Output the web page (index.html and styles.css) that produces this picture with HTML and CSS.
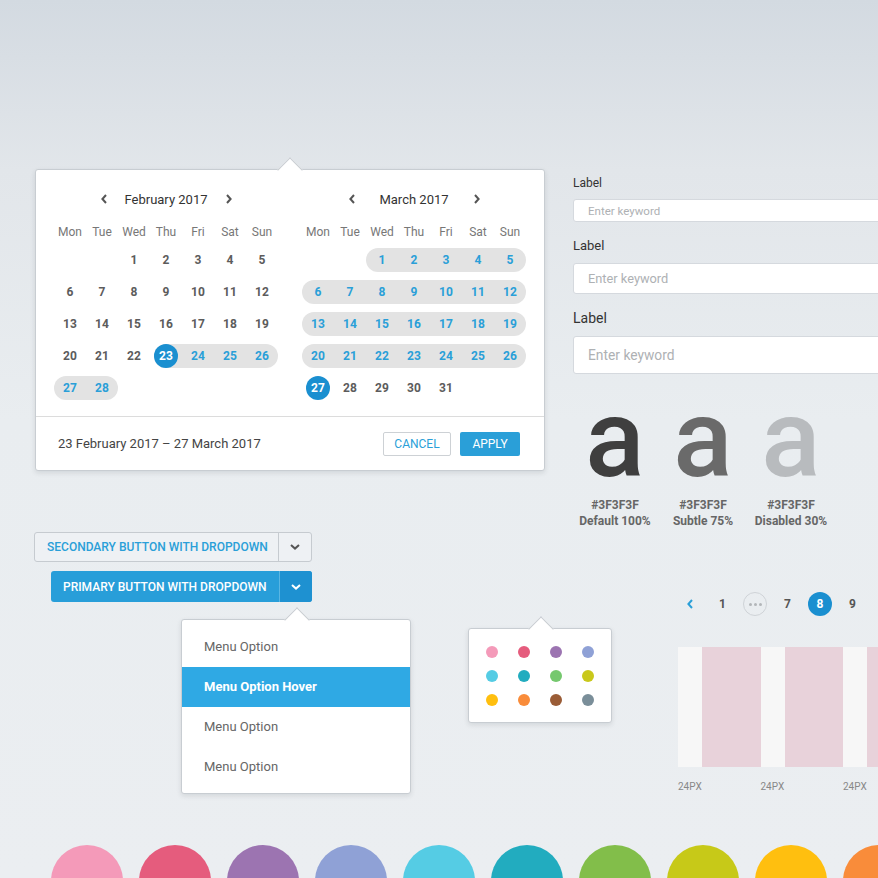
FILE: index.html
```html
<!DOCTYPE html>
<html lang="en">
<head>
<meta charset="utf-8">
<title>UI Kit</title>
<link rel="stylesheet" href="styles.css">
</head>
<body>
<main class="board">
  <section class="top">
    <div class="datepicker">
      <div class="cal-body">
        <div class="month">
          <div class="mhead">
            <span class="nav"><svg width="6" height="10" viewBox="0 0 6 10"><path d="M5 1 L1.4 5 L5 9" fill="none" stroke="#555" stroke-width="2"/></svg></span>
            <span class="mtitle">February 2017</span>
            <span class="nav"><svg width="6" height="10" viewBox="0 0 6 10"><path d="M1 1 L4.6 5 L1 9" fill="none" stroke="#555" stroke-width="2"/></svg></span>
          </div>
          <div class="days">
            <span class="wd">Mon</span><span class="wd">Tue</span><span class="wd">Wed</span><span class="wd">Thu</span><span class="wd">Fri</span><span class="wd">Sat</span><span class="wd">Sun</span>
            <span></span><span></span><span class="d">1</span><span class="d">2</span><span class="d">3</span><span class="d">4</span><span class="d">5</span>
            <span class="d">6</span><span class="d">7</span><span class="d">8</span><span class="d">9</span><span class="d">10</span><span class="d">11</span><span class="d">12</span>
            <span class="d">13</span><span class="d">14</span><span class="d">15</span><span class="d">16</span><span class="d">17</span><span class="d">18</span><span class="d">19</span>
            <span class="d">20</span><span class="d">21</span><span class="d">22</span><span class="d in sel"><span class="dot">23</span></span><span class="d in">24</span><span class="d in">25</span><span class="d in re">26</span>
            <span class="d in rs">27</span><span class="d in re">28</span>
          </div>
        </div>
        <div class="month">
          <div class="mhead">
            <span class="nav"><svg width="6" height="10" viewBox="0 0 6 10"><path d="M5 1 L1.4 5 L5 9" fill="none" stroke="#555" stroke-width="2"/></svg></span>
            <span class="mtitle">March 2017</span>
            <span class="nav"><svg width="6" height="10" viewBox="0 0 6 10"><path d="M1 1 L4.6 5 L1 9" fill="none" stroke="#555" stroke-width="2"/></svg></span>
          </div>
          <div class="days">
            <span class="wd">Mon</span><span class="wd">Tue</span><span class="wd">Wed</span><span class="wd">Thu</span><span class="wd">Fri</span><span class="wd">Sat</span><span class="wd">Sun</span>
            <span></span><span></span><span class="d in rs">1</span><span class="d in">2</span><span class="d in">3</span><span class="d in">4</span><span class="d in re">5</span>
            <span class="d in rs">6</span><span class="d in">7</span><span class="d in">8</span><span class="d in">9</span><span class="d in">10</span><span class="d in">11</span><span class="d in re">12</span>
            <span class="d in rs">13</span><span class="d in">14</span><span class="d in">15</span><span class="d in">16</span><span class="d in">17</span><span class="d in">18</span><span class="d in re">19</span>
            <span class="d in rs">20</span><span class="d in">21</span><span class="d in">22</span><span class="d in">23</span><span class="d in">24</span><span class="d in">25</span><span class="d in re">26</span>
            <span class="d"><span class="dot">27</span></span><span class="d">28</span><span class="d">29</span><span class="d">30</span><span class="d">31</span>
          </div>
        </div>
      </div>
      <div class="cal-foot">
        <span class="range">23 February 2017 – 27 March 2017</span>
        <div class="actions">
          <span class="btn-ghost">CANCEL</span>
          <span class="btn-apply">APPLY</span>
        </div>
      </div>
    </div>

    <div class="side">
      <div class="lbl lbl-sm">Label</div>
      <div class="input in-sm">Enter keyword</div>
      <div class="lbl lbl-md">Label</div>
      <div class="input in-md">Enter keyword</div>
      <div class="lbl lbl-lg">Label</div>
      <div class="input in-lg">Enter keyword</div>
      <div class="type-row">
        <div class="type">
          <div class="glyph g100">a</div>
          <div class="type-meta">#3F3F3F<br>Default 100%</div>
        </div>
        <div class="type">
          <div class="glyph g75">a</div>
          <div class="type-meta">#3F3F3F<br>Subtle 75%</div>
        </div>
        <div class="type">
          <div class="glyph g30">a</div>
          <div class="type-meta">#3F3F3F<br>Disabled 30%</div>
        </div>
      </div>
    </div>
  </section>

  <section class="mid">
    <div class="btn-col">
      <div class="split secondary">
        <span class="split-label">SECONDARY BUTTON WITH DROPDOWN</span>
        <span class="caret"><svg width="10" height="6" viewBox="0 0 10 6"><path d="M1 1 L5 4.6 L9 1" fill="none" stroke="#555" stroke-width="2"/></svg></span>
      </div>
      <div class="split primary">
        <span class="split-label">PRIMARY BUTTON WITH DROPDOWN</span>
        <span class="caret"><svg width="10" height="6" viewBox="0 0 10 6"><path d="M1 1 L5 4.6 L9 1" fill="none" stroke="#fff" stroke-width="2"/></svg></span>
      </div>
      <div class="menu">
        <div class="opt">Menu Option</div>
        <div class="opt hover">Menu Option Hover</div>
        <div class="opt">Menu Option</div>
        <div class="opt">Menu Option</div>
      </div>
    </div>

    <div class="picker">
      <span class="pdot pink"></span><span class="pdot rose"></span><span class="pdot purple"></span><span class="pdot peri"></span>
      <span class="pdot cyan"></span><span class="pdot teal"></span><span class="pdot green-l"></span><span class="pdot olive"></span>
      <span class="pdot amber"></span><span class="pdot orange"></span><span class="pdot brown"></span><span class="pdot slate"></span>
    </div>

    <div class="pager-col">
      <div class="pages">
        <span class="pg"><svg width="6" height="10" viewBox="0 0 6 10"><path d="M5 1 L1.4 5 L5 9" fill="none" stroke="#2a9fd8" stroke-width="2"/></svg></span>
        <span class="pg">1</span>
        <span class="pg more"><i></i><i></i><i></i></span>
        <span class="pg">7</span>
        <span class="pg on">8</span>
        <span class="pg">9</span>
      </div>
      <div class="gridbox">
        <span class="gut"></span><span class="colm"></span>
        <span class="gut"></span><span class="colm"></span>
        <span class="gut"></span><span class="colm"></span>
      </div>
      <div class="glabels">
        <span>24PX</span><span>24PX</span><span>24PX</span>
      </div>
    </div>
  </section>

  <section class="swatches">
    <span class="sw pink"></span>
    <span class="sw rose"></span>
    <span class="sw purple"></span>
    <span class="sw peri"></span>
    <span class="sw cyan"></span>
    <span class="sw teal"></span>
    <span class="sw green"></span>
    <span class="sw lime"></span>
    <span class="sw amber"></span>
    <span class="sw orange"></span>
  </section>
</main>
</body>
</html>
```

FILE: styles.css
```css
* { box-sizing: border-box; margin: 0; padding: 0; }

html, body {
  width: 878px;
  height: 878px;
  overflow: hidden;
}

body {
  font-family: Roboto, "Liberation Sans", Arial, sans-serif;
  color: #444;
  background: linear-gradient(to bottom, #d3dae1 0px, #e2e6ea 170px, #e9edf0 420px, #ebeef1 878px);
}

.board {
  width: 878px;
  height: 878px;
  overflow: hidden;
  padding-top: 157px;
}

/* ---------- top row ---------- */
.top {
  display: flex;
  align-items: flex-start;
}

.datepicker {
  position: relative;
  flex: none;
  width: 510px;
  margin-left: 35px;
  margin-top: 12px;
  background: #fff;
  border: 1px solid #c8cdd2;
  border-radius: 3px;
  box-shadow: 0 2px 5px rgba(40, 50, 60, 0.12);
}

.datepicker::before {
  content: "";
  position: absolute;
  top: -9px;
  left: 245px;
  width: 17px;
  height: 17px;
  background: #fff;
  border-top: 1px solid #c8cdd2;
  border-left: 1px solid #c8cdd2;
  transform: rotate(45deg);
}

.cal-body {
  display: flex;
  gap: 24px;
  padding: 19px 18px 12px;
}

.month { width: 224px; }

.mhead {
  display: grid;
  grid-template-columns: 24px 1fr 24px;
  align-items: center;
  width: 149px;
  height: 20px;
  margin: 0 auto;
}

.nav {
  display: flex;
  justify-content: center;
  align-items: center;
}

.mtitle {
  text-align: center;
  font-size: 13px;
  color: #333;
  white-space: nowrap;
}

.days {
  display: grid;
  grid-template-columns: repeat(7, 32px);
  grid-template-rows: 24px;
  grid-auto-rows: 32px;
  align-items: center;
  margin-top: 11px;
}

.wd {
  text-align: center;
  font-size: 12px;
  line-height: 24px;
  color: #777;
}

.d {
  height: 24px;
  display: flex;
  align-items: center;
  justify-content: center;
  font-size: 12px;
  font-weight: 700;
  color: #5c5c5c;
}

.d.in {
  background: #e3e3e3;
  color: #2a9fd8;
}

.d.rs { border-radius: 12px 0 0 12px; }
.d.re { border-radius: 0 12px 12px 0; }

.d.sel {
  margin-left: 4px;
  justify-content: flex-start;
  border-radius: 12px 0 0 12px;
}

.dot {
  width: 24px;
  height: 24px;
  border-radius: 50%;
  background: #1a8fd0;
  color: #fff;
  display: flex;
  align-items: center;
  justify-content: center;
}

.cal-foot {
  display: flex;
  align-items: center;
  justify-content: space-between;
  height: 54px;
  border-top: 1px solid #dcdcdc;
  padding: 0 24px 0 22px;
}

.range {
  font-size: 13px;
  color: #444;
}

.actions {
  display: flex;
  gap: 9px;
}

.btn-ghost,
.btn-apply {
  height: 24px;
  display: flex;
  align-items: center;
  justify-content: center;
  font-size: 12px;
  border-radius: 2px;
}

.btn-ghost {
  width: 68px;
  border: 1px solid #cdd1d5;
  color: #2a9fd8;
  background: #fff;
}

.btn-apply {
  width: 60px;
  background: #2a9fd8;
  color: #fff;
}

/* side column */
.side {
  flex: none;
  width: 330px;
  margin-left: 28px;
  margin-top: 18px;
}

.lbl { color: #333; }
.lbl-sm { font-size: 12px; line-height: 16px; }
.lbl-md { font-size: 13px; line-height: 18px; margin-top: 15px; }
.lbl-lg { font-size: 14px; line-height: 20px; margin-top: 14px; }

.input {
  display: flex;
  align-items: center;
  width: 330px;
  margin-top: 8px;
  padding-left: 14px;
  background: #fff;
  border: 1px solid #d5d9de;
  border-radius: 3px;
  color: #aeb1b4;
}

.in-sm { height: 23px; font-size: 11.5px; }
.in-md { height: 31px; font-size: 12.8px; }
.in-lg { height: 38px; font-size: 13.8px; }

.type-row {
  display: flex;
  margin-left: -2px;
  margin-top: 10px;
}

.type {
  width: 88px;
  text-align: center;
}

.glyph {
  font-size: 110px;
  line-height: 110px;
  font-weight: 500;
}

.g100 { color: #3f3f3f; }
.g75 { color: #6a6a6a; }
.g30 { color: #b8bbbe; }

.type-meta {
  margin-top: 3px;
  font-size: 12px;
  line-height: 16px;
  font-weight: 700;
  color: #666;
  white-space: nowrap;
}

/* ---------- middle row ---------- */
.mid {
  display: flex;
  align-items: flex-start;
}

.btn-col {
  flex: none;
  width: 377px;
  margin-left: 34px;
  margin-top: 3px;
  display: flex;
  flex-direction: column;
  align-items: flex-start;
}

.split {
  display: flex;
  border-radius: 3px;
}

.split-label {
  flex: 1;
  display: flex;
  align-items: center;
  padding-left: 12px;
  font-size: 12px;
  font-weight: 500;
  white-space: nowrap;
}

.caret {
  width: 33px;
  display: flex;
  align-items: center;
  justify-content: center;
}

.split.secondary {
  width: 278px;
  height: 30px;
  border: 1px solid #c6cbd0;
  background: #eef1f4;
  color: #2a9fd8;
}

.secondary .caret { border-left: 1px solid #c6cbd0; }

.split.primary {
  width: 261px;
  height: 31px;
  margin-left: 17px;
  margin-top: 9px;
  background: #289ed9;
  color: #fff;
}

.primary .caret {
  background: #1e91d1;
  border-left: 1px solid #5ab6e3;
  border-radius: 0 3px 3px 0;
}

.menu {
  position: relative;
  width: 230px;
  margin-top: 17px;
  margin-left: 147px;
  padding: 7px 0 6px;
  background: #fff;
  border: 1px solid #c8cdd2;
  border-radius: 3px;
  box-shadow: 0 2px 5px rgba(40, 50, 60, 0.12);
}

.menu::before,
.picker::before {
  content: "";
  position: absolute;
  top: -9px;
  width: 17px;
  height: 17px;
  background: #fff;
  border-top: 1px solid #c8cdd2;
  border-left: 1px solid #c8cdd2;
  transform: rotate(45deg);
}

.menu::before { left: 105.5px; }

.opt {
  position: relative;
  height: 40px;
  display: flex;
  align-items: center;
  padding-left: 22px;
  padding-bottom: 1px;
  font-size: 13px;
  color: #666;
}

.opt.hover {
  background: #2fa9e4;
  color: #fff;
  font-weight: 700;
}

.picker {
  position: relative;
  flex: none;
  width: 144px;
  height: 95px;
  margin-left: 57px;
  margin-top: 99px;
  padding: 17px 17px 16px;
  background: #fff;
  border: 1px solid #c8cdd2;
  border-radius: 3px;
  box-shadow: 0 2px 5px rgba(40, 50, 60, 0.12);
  display: grid;
  grid-template-columns: repeat(4, 12px);
  grid-auto-rows: 12px;
  column-gap: 20px;
  row-gap: 12px;
}

.picker::before { left: 62.5px; }

.pdot {
  position: relative;
  width: 12px;
  height: 12px;
  border-radius: 50%;
}

.pager-col {
  flex: none;
  width: 240px;
  margin-left: 66px;
  margin-top: 63px;
}

.pages {
  display: flex;
  gap: 8.5px;
  height: 24px;
}

.pg {
  flex: none;
  width: 24px;
  height: 24px;
  border-radius: 50%;
  display: flex;
  align-items: center;
  justify-content: center;
  font-size: 12px;
  font-weight: 700;
  color: #555;
}

.pg.on {
  background: #1a8fd0;
  color: #fff;
}

.pg.more {
  border: 1px solid #cfd3d7;
  gap: 2px;
}

.pg.more i {
  width: 3px;
  height: 3px;
  border-radius: 50%;
  background: #b3b6b9;
}

.gridbox {
  display: flex;
  height: 120px;
  margin-top: 31px;
}

.gut {
  flex: none;
  width: 24px;
  background: #f7f7f7;
}

.colm {
  flex: none;
  width: 58.5px;
  background: #e8d2da;
}

.glabels {
  display: flex;
  margin-top: 13px;
  font-size: 10px;
  line-height: 14px;
  color: #888;
}

.glabels span {
  flex: none;
  width: 82.5px;
}

/* ---------- swatches ---------- */
.swatches {
  display: flex;
  gap: 16px;
  margin-left: 51px;
  margin-top: 51px;
}

.sw {
  flex: none;
  width: 72px;
  height: 72px;
  border-radius: 50%;
}

.pink { background: #f49ab9; }
.rose { background: #e55c7d; }
.purple { background: #9c74b1; }
.peri { background: #8fa1d6; }
.cyan { background: #55cce4; }
.teal { background: #22acbf; }
.green-l { background: #75c86e; }
.green { background: #82be4a; }
.olive { background: #c9c81b; }
.lime { background: #c7c918; }
.amber { background: #ffbf0f; }
.orange { background: #f98c3a; }
.brown { background: #9a5c36; }
.slate { background: #7a8e99; }
```
